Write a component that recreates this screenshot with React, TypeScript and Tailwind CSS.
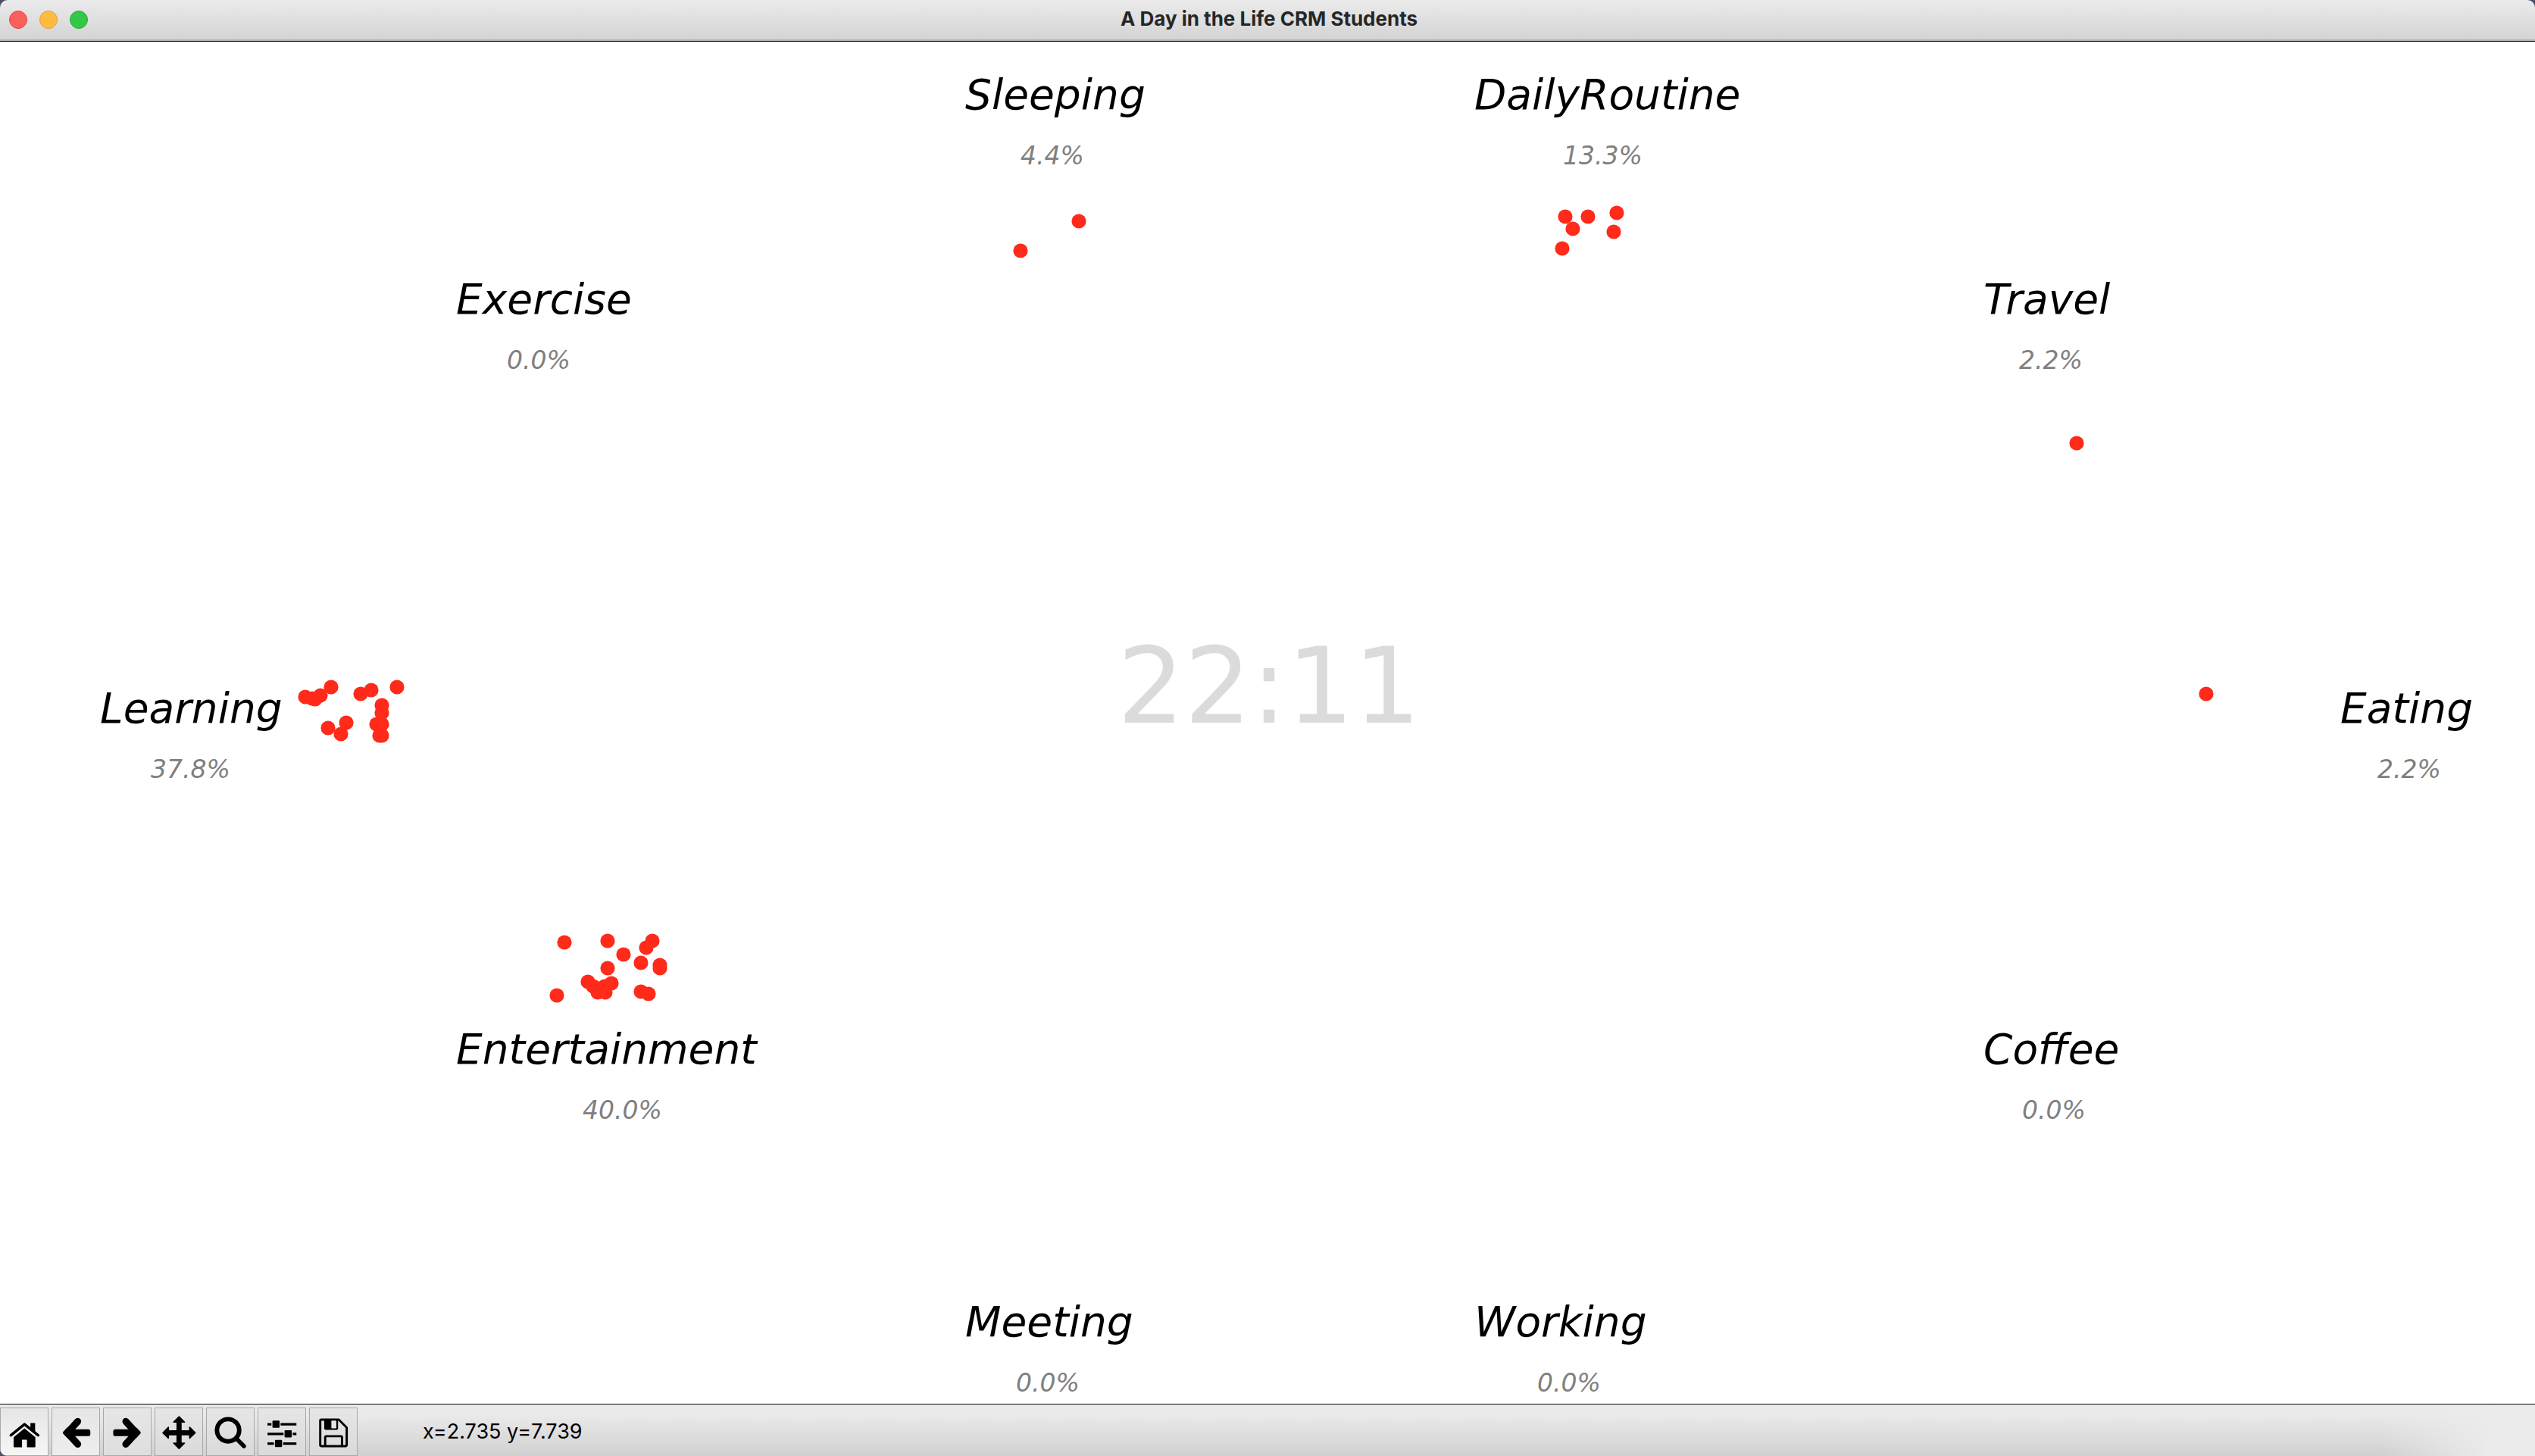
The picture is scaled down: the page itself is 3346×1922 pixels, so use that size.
import React from "react";

// Extent of the plot's coordinate space; marks are placed in proportion to it.
const SPAN_X = 3346;
const SPAN_Y = 1798;

const left = (x: number) => `${(x / SPAN_X) * 100}%`;
const top = (y: number) => `${(y / SPAN_Y) * 100}%`;

type Activity = { name: string; share: string; x: number; y: number; indent: number };

const activities: Activity[] = [
  { name: "Sleeping", share: "4.4%", x: 1274, y: 89, indent: 73 },
  { name: "DailyRoutine", share: "13.3%", x: 1946, y: 89, indent: 117 },
  { name: "Exercise", share: "0.0%", x: 602, y: 359, indent: 67 },
  { name: "Travel", share: "2.2%", x: 2618, y: 359, indent: 47 },
  { name: "Learning", share: "37.8%", x: 132, y: 899, indent: 67 },
  { name: "Eating", share: "2.2%", x: 3089, y: 899, indent: 49 },
  { name: "Entertainment", share: "40.0%", x: 602, y: 1349, indent: 167 },
  { name: "Coffee", share: "0.0%", x: 2618, y: 1349, indent: 51 },
  { name: "Meeting", share: "0.0%", x: 1274, y: 1709, indent: 67 },
  { name: "Working", share: "0.0%", x: 1946, y: 1709, indent: 83 },
];

const students: [number, number][] = [
  // Sleeping
  [1424, 237], [1347, 276],
  // DailyRoutine
  [2066, 231], [2096, 231], [2076, 247], [2062, 273], [2134, 226], [2130, 251],
  // Travel, Eating
  [2741, 530], [2912, 861],
  // Learning
  [403, 865], [412, 867], [416, 868], [423, 863], [437, 852], [476, 861],
  [490, 856], [524, 852], [504, 876], [504, 886], [497, 901], [504, 901],
  [504, 916], [501, 916], [433, 906], [450, 914], [457, 899],
  // Entertainment
  [745, 1189], [802, 1187], [823, 1205], [861, 1187], [853, 1196], [846, 1216],
  [871, 1219], [871, 1223], [802, 1223], [776, 1241], [807, 1243], [783, 1247],
  [789, 1255], [799, 1255], [798, 1247], [735, 1259], [846, 1254], [856, 1257],
];

function Icon({ children }: { children: React.ReactNode }) {
  return (
    <svg viewBox="0 0 190 190" className="size-full" aria-hidden="true">
      {children}
    </svg>
  );
}

const arrow = (
  <>
    <path d="M103 53 L61 99 L103 145" fill="none" stroke="#000" strokeWidth="28" strokeLinecap="round" strokeLinejoin="round" />
    <path d="M44 95 L62 76 V122 L44 103 Q41 99 44 95Z" />
    <rect x="62" y="85" width="92" height="28" rx="9" />
  </>
);

const tools: { label: string; lit: string; icon: React.ReactNode }[] = [
  {
    label: "Home",
    lit: "from-[#e6e6e6] to-[#f6f6f6]",
    icon: (
      <>
        <path d="M41 109 L96 65 L151 109" fill="none" stroke="#000" strokeWidth="11" strokeLinecap="round" strokeLinejoin="round" />
        <path d="M120 62 Q120 60 122 60 H137 Q139 60 139 62 V98 L120 82Z" />
        <path d="M96 81 L140 117 V155 Q140 158 137 158 H106 V127 H86 V158 H55 Q52 158 52 155 V117Z" />
      </>
    ),
  },
  { label: "Back", lit: "from-[#e6e6e6] to-[#ededed]", icon: arrow },
  { label: "Forward", lit: "from-[#e6e6e6] to-[#dedede]", icon: <g transform="translate(192 0) scale(-1 1)">{arrow}</g> },
  {
    label: "Pan",
    lit: "from-[#e6e6e6] to-[#dadada]",
    icon: (
      <g stroke="#000" strokeLinejoin="round" strokeWidth="5">
        <path d="M88 50 H104 V148 H88Z" />
        <path d="M46 91 H146 V107 H46Z" />
        <path d="M96 34 L118 56 H74Z" />
        <path d="M96 163 L118 141 H74Z" />
        <path d="M31 99 L53 77 V121Z" />
        <path d="M161 99 L139 77 V121Z" />
      </g>
    ),
  },
  {
    label: "Zoom",
    lit: "from-[#e6e6e6] to-[#dadada]",
    icon: (
      <g fill="none" stroke="#000" strokeLinecap="round">
        <circle cx="86" cy="89" r="45" strokeWidth="18" />
        <path d="M121 124 L150 153" strokeWidth="17" />
      </g>
    ),
  },
  {
    label: "Configure subplots",
    lit: "from-[#e6e6e6] to-[#dadada]",
    icon: (
      <>
        <path d="M37 65 H154 M37 104 H154 M37 143 H154" stroke="#000" strokeWidth="10" />
        <g stroke="#e2e2e2" strokeWidth="4">
          <rect x="55" y="48" width="33" height="33" rx="5" />
          <rect x="104" y="87" width="33" height="33" rx="5" />
          <rect x="65" y="126" width="33" height="33" rx="5" />
        </g>
      </>
    ),
  },
  {
    label: "Save",
    lit: "from-[#e6e6e6] to-[#dadada]",
    icon: (
      <>
        <path d="M46 46 H117 L149 78 V148 Q149 153 144 153 H46 Q42 153 42 149 V50 Q42 46 46 46Z" fill="none" stroke="#000" strokeWidth="9" strokeLinejoin="round" />
        <path d="M58 44 H114 V81 Q114 87 108 87 H64 Q58 87 58 81Z" />
        <rect x="87" y="50" width="20" height="31" rx="3" fill="#e4e4e4" />
        <path d="M62 153 V117 Q62 113 66 113 H126 Q130 113 130 117 V153" fill="none" stroke="#000" strokeWidth="9" />
      </>
    ),
  },
];

function TitleBar() {
  return (
    <header className="relative flex h-[55px] items-center border-b border-black bg-linear-to-b from-[#ebebeb] to-[#d3d3d3] px-3 pb-0.5 shadow-[inset_0_-2px_0_#b4b2b6]">
      <div className="flex gap-4">
        <button aria-label="Close" className="size-6 rounded-full border border-[#e2463f] bg-[#fc605c]" />
        <button aria-label="Minimize" className="size-6 rounded-full border border-[#dfa037] bg-[#fdbc40]" />
        <button aria-label="Full screen" className="size-6 rounded-full border border-[#27aa35] bg-[#34c84a]" />
      </div>
      <h1 className="pointer-events-none absolute inset-x-0 pb-0.5 pl-1 text-center font-['Inter',sans-serif] text-[26px] leading-8 font-bold text-[#262626]">
        A Day in the Life CRM Students
      </h1>
    </header>
  );
}

function Plot() {
  return (
    <main className="relative flex flex-1 items-center justify-center overflow-hidden bg-white font-['DejaVu_Sans',sans-serif]">
      <svg className="absolute inset-0 size-full" role="img" aria-label="Students by activity">
        {students.map(([x, y], i) => (
          <circle key={i} cx={left(x)} cy={top(y)} r="9.6" fill="#ff2a1a" />
        ))}
      </svg>
      {activities.map((a) => (
        <section
          key={a.name}
          className="absolute flex -translate-y-[47px] flex-col gap-9 whitespace-nowrap italic"
          style={{ left: left(a.x), top: top(a.y) }}
        >
          <h2 className="text-[55px] leading-[56px] text-black">{a.name}</h2>
          <p className="text-[33px] leading-[33px] text-[#808080]" style={{ paddingLeft: a.indent }}>
            {a.share}
          </p>
        </section>
      ))}
      <time className="pb-24 pl-1 text-[139px] leading-none text-[#dbdbdb]">22:11</time>
    </main>
  );
}

function Toolbar() {
  return (
    <footer className="flex h-[69px] items-start border-t border-black bg-linear-to-b from-[#eaeaea] from-20% to-[#d0d0d0]">
      <div role="toolbar" aria-label="Plot tools" className="flex gap-1 pt-1">
        {tools.map((t) => (
          <button key={t.label} aria-label={t.label} className={`size-16 border border-[#a8a8a8] bg-linear-to-b ${t.lit}`}>
            <Icon>{t.icon}</Icon>
          </button>
        ))}
      </div>
      <output className="self-center pt-1 pl-[86px] font-['Inter',sans-serif] text-[27px] leading-8 text-black">x=2.735 y=7.739</output>
      <div className="ml-auto h-full w-60 bg-linear-to-r from-transparent from-15% to-[#ebebeb] to-75%" />
    </footer>
  );
}

export default function App() {
  return (
    <div className="min-h-screen bg-[#4b5068]">
      <div className="flex min-h-screen flex-col overflow-hidden rounded-t-[10px] rounded-bl-[10px]">
        <TitleBar />
        <Plot />
        <Toolbar />
      </div>
    </div>
  );
}
